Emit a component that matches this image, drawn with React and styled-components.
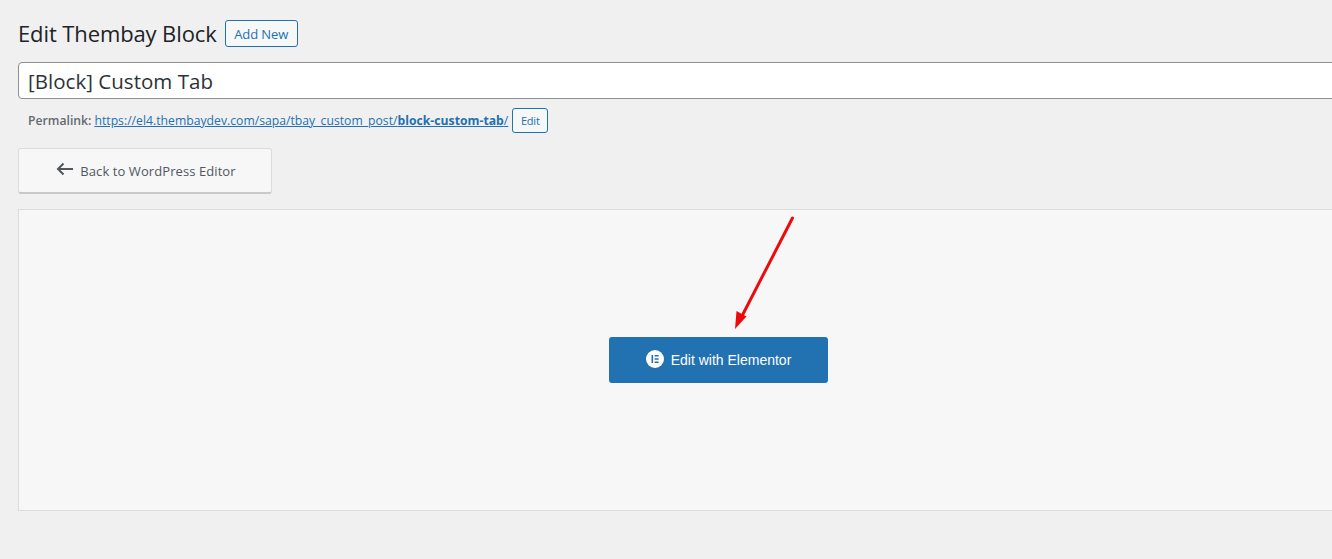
import React from "react";
import styled, { createGlobalStyle } from "styled-components";

const GlobalStyle = createGlobalStyle`
  html, body {
    margin: 0;
    padding: 0;
    height: 100%;
    overflow: hidden;
    background: #f0f0f1;
  }
`;

const Page = styled.div`
  position: relative;
  width: 1401px;
  height: 559px;
  margin-left: 18px;
  padding-top: 20px;
  box-sizing: border-box;
  font-family: "Open Sans", "Noto Sans", sans-serif;
  color: #1d2327;
`;

const Header = styled.div`
  display: flex;
  align-items: center;
  gap: 8px;
  height: 27px;
`;

const Title = styled.h1`
  margin: 0;
  font-size: 22px;
  font-weight: 400;
  letter-spacing: -0.11px;
  line-height: 29px;
  color: #1d2327;
`;

const OutlineButton = styled.a`
  display: flex;
  align-items: center;
  justify-content: center;
  box-sizing: border-box;
  width: ${(p) => p.$width}px;
  height: ${(p) => p.$height}px;
  border: 1px solid #2271b1;
  border-radius: 3px;
  background: #f6f7f7;
  color: #2271b1;
  font-size: ${(p) => p.$size}px;
  letter-spacing: ${(p) => p.$spacing}px;
`;

const TitleInput = styled.div`
  box-sizing: border-box;
  height: 37px;
  margin-top: 15px;
  padding-left: 9px;
  border: 1px solid #8c8f94;
  border-radius: 4px;
  background: #fff;
  font-size: 20.5px;
  line-height: 37px;
  letter-spacing: 0.03px;
  color: #2c3338;
`;

const PermalinkRow = styled.div`
  display: flex;
  align-items: center;
  height: 25px;
  margin-top: 9px;
  padding-left: 10px;
  font-size: 12.2px;
  letter-spacing: 0.01px;
  color: #646970;
`;

const PermalinkLabel = styled.strong`
  font-weight: 600;
  margin-right: 3px;
`;

const PermalinkUrl = styled.a`
  color: #2271b1;
  text-decoration: underline;
  margin-right: 4px;
`;

const BackButton = styled.a`
  display: flex;
  align-items: center;
  justify-content: center;
  gap: 6px;
  box-sizing: border-box;
  width: 254px;
  height: 46px;
  margin-top: 15px;
  padding-left: 2px;
  border: 1px solid #dcdcde;
  border-bottom: 2px solid #c9c9cb;
  border-radius: 3px;
  background: #f7f7f7;
  color: #50575e;
  font-size: 13px;
  letter-spacing: 0.08px;
`;

const BackIcon = styled.svg`
  display: block;
  margin-top: -3px;
`;

const EditorPanel = styled.div`
  display: flex;
  align-items: center;
  justify-content: center;
  box-sizing: border-box;
  height: 302px;
  margin-top: 15px;
  border: 1px solid #dcdcde;
  background: #f7f7f7;
`;

const ElementorButton = styled.a`
  display: flex;
  align-items: center;
  justify-content: center;
  gap: 7px;
  width: 219px;
  height: 46px;
  border-radius: 3px;
  background: #2271b1;
  color: #fff;
  font-family: "Liberation Sans", Arial, sans-serif;
  font-size: 14px;
`;

const ElementorIcon = styled.svg`
  display: block;
  margin-top: -2px;
`;

const Arrow = styled.svg`
  position: absolute;
  left: -18px;
  top: 0;
  pointer-events: none;
`;

export default function App() {
  return (
    <>
      <GlobalStyle />
      <Page>
        <Header>
          <Title>Edit Thembay Block</Title>
          <OutlineButton $width={73} $height={27} $size={13} $spacing={-0.1}>
            Add New
          </OutlineButton>
        </Header>
        <TitleInput>[Block] Custom Tab</TitleInput>
        <PermalinkRow>
          <PermalinkLabel>Permalink:</PermalinkLabel>
          <PermalinkUrl>
            https://el4.thembaydev.com/sapa/tbay_custom_post/
            <strong>block-custom-tab</strong>/
          </PermalinkUrl>
          <OutlineButton $width={36} $height={25} $size={11} $spacing={-0.2}>
            Edit
          </OutlineButton>
        </PermalinkRow>
        <BackButton>
          <BackIcon width="18" height="14" viewBox="0 0 18 14" fill="none">
            <path
              d="M17 7H2M7.5 1.5 2 7l5.5 5.5"
              stroke="#50575e"
              strokeWidth="2"
            />
          </BackIcon>
          Back to WordPress Editor
        </BackButton>
        <EditorPanel>
          <ElementorButton>
            <ElementorIcon width="18" height="18" viewBox="0 0 18 18">
              <circle cx="9" cy="9" r="9" fill="#fff" />
              <path
                d="M5.5 5h1.6v8H5.5zM8.6 5h4v1.6h-4zM8.6 8.2h4v1.6h-4zM8.6 11.4h4V13h-4z"
                fill="#2271b1"
              />
            </ElementorIcon>
            Edit with Elementor
          </ElementorButton>
        </EditorPanel>
        <Arrow width="1332" height="559" viewBox="0 0 1332 559">
          <line
            x1="792.5"
            y1="218"
            x2="741"
            y2="318"
            stroke="#ee0a0a"
            strokeWidth="3"
            strokeLinecap="round"
          />
          <polygon points="735,329 736.5,311 746.5,316.5" fill="#ee0a0a" />
        </Arrow>
      </Page>
    </>
  );
}
